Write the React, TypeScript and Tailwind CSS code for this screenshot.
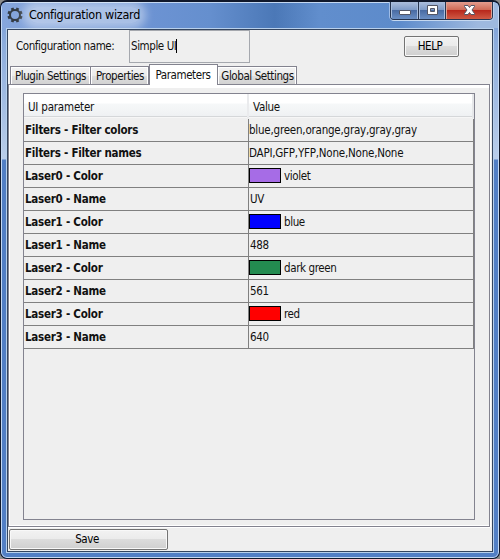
import React from 'react';

type Row = { name: string; value: string; swatch?: string; tight?: boolean };

const rows: Row[] = [
  { name: 'Filters - Filter colors', value: 'blue,green,orange,gray,gray,gray' },
  { name: 'Filters - Filter names', value: 'DAPI,GFP,YFP,None,None,None' },
  { name: 'Laser0 - Color', value: 'violet', swatch: 'bg-[#a66ce6]', tight: true },
  { name: 'Laser0 - Name', value: 'UV', tight: true },
  { name: 'Laser1 - Color', value: 'blue', swatch: 'bg-[#0000ff]', tight: true },
  { name: 'Laser1 - Name', value: '488', tight: true },
  { name: 'Laser2 - Color', value: 'dark green', swatch: 'bg-[#238b50]', tight: true },
  { name: 'Laser2 - Name', value: '561', tight: true },
  { name: 'Laser3 - Color', value: 'red', swatch: 'bg-[#ff0000]', tight: true },
  { name: 'Laser3 - Name', value: '640', tight: true },
];

function Gear() {
  const teeth = [22.5, 67.5, 112.5, 157.5, 202.5, 247.5, 292.5, 337.5];
  return (
    <svg width="16" height="16" viewBox="0 0 16 16" className="shrink-0">
      <circle cx="8" cy="8" r="5" fill="none" stroke="#333b43" strokeWidth="2" />
      {teeth.map((a) => (
        <rect key={a} x="6.6" y="0.4" width="2.8" height="2.6" fill="#333b43" transform={`rotate(${a} 8 8)`} />
      ))}
    </svg>
  );
}

function Tab({ label, className }: { label: string; className: string }) {
  return (
    <div className={`flex h-[18px] items-center justify-center border-t border-r border-[#83838f] bg-[linear-gradient(180deg,#f3f3f3,#ebebeb_50%,#dedede_52%,#d2d2d2)] pt-px shadow-[inset_1px_1px_0_#fff,inset_-1px_0_0_#fff] ${className}`}>
      {label}
    </div>
  );
}

function PushButton({ label, className }: { label: string; className: string }) {
  return (
    <div className={`flex h-[21px] items-center justify-center rounded-[2px] border border-[#737373] bg-[linear-gradient(180deg,#f2f2f2,#ebebeb_48%,#dcdcdc_50%,#cfcfcf)] pb-px text-black shadow-[inset_0_0_0_1px_#f8f8f8] ${className}`}>
      {label}
    </div>
  );
}

function WindowButtons() {
  return (
    <div className="flex h-[19px] w-[103px] overflow-hidden rounded-b-[4px] border border-t-0 border-[#26344f] shadow-[0_1px_0_#c5d8f0,1px_0_0_#b9cfeb,-1px_0_0_#9fbce6]">
      <div className="flex w-[28px] items-center justify-center border-r border-[#26344f] bg-[linear-gradient(180deg,#b2c3df,#7f9bc7_48%,#496ba3_52%,#6b8fc4)] pt-px shadow-[inset_1px_0_0_#a8bddd,inset_-1px_0_0_#a8bddd]">
        <svg width="14" height="14" viewBox="0 0 14 14"><rect x="1.5" y="6.5" width="11" height="4" rx="0.5" fill="#fff" stroke="#535666" /></svg>
      </div>
      <div className="flex w-[27px] items-center justify-center border-r border-[#26344f] bg-[linear-gradient(180deg,#b2c3df,#7f9bc7_48%,#496ba3_52%,#6b8fc4)] shadow-[inset_1px_0_0_#a8bddd,inset_-1px_0_0_#a8bddd]">
        <svg width="13" height="11" viewBox="0 0 13 11"><path d="M1.5 .5h10v9h-10zM4.5 3.5h4v3h-4z" fill="#fff" fillRule="evenodd" stroke="#535666" /></svg>
      </div>
      <div className="flex grow items-center justify-center bg-[linear-gradient(180deg,#e5a395,#cf6b57_48%,#b8281c_52%,#cf5a45)] shadow-[inset_1px_0_0_#dfa193,inset_-1px_0_0_#dfa193]">
        <svg width="13" height="11" viewBox="0 0 13 11"><path d="M1.5 .5H5L6.5 2.5 8 .5h3.5v1L9 5l2.5 3.5v1H8L6.5 7.5 5 9.5H1.5v-1L4 5 1.5 1.5z" fill="#fff" stroke="#535666" /></svg>
      </div>
    </div>
  );
}

export default function App() {
  return (
    <div className="h-[559px] w-[500px] bg-[#8c8c8c] font-['DejaVu_Sans_Condensed','DejaVu_Sans',sans-serif] text-[11.5px] leading-[14px] tracking-[-0.42px] text-[#111] [font-stretch:condensed]">
      <div className="h-full overflow-hidden rounded-[7px] border border-t-2 border-[#10182b] bg-[#527fc5]">
        <div className="h-full rounded-[6px] border border-[#c4d8f2] bg-[linear-gradient(180deg,#7598d2_0px,#8cacdc_40px,#b9cdea_156px,#527fc5_157px)]">
          <header className="flex h-[25px] justify-between bg-[linear-gradient(90deg,#86a6dc_0%,#6c93d3_30%,#658fce_42%,#4b78b7_55%,#618ecd_64%,#5d8bcb_80%,#9eb9df_96%)] pl-[5px]">
            <div className="flex items-center gap-[6px] pb-[2px]">
              <Gear />
              <span className="rounded-full bg-white/40 text-[12.5px] leading-[16px] tracking-[-0.27px] text-black shadow-[0_0_9px_6px_rgba(255,255,255,0.4)]">Configuration wizard</span>
            </div>
            <div className="-mt-[2px] mr-[5px]"><WindowButtons /></div>
          </header>
          <main className="mx-[4px] flex h-[525px] flex-col border border-[#b8d0ec]">
            <div className="flex grow flex-col border border-[#34455f] bg-[#efefef]">
              <div className="flex h-[34px]">
                <span className="w-[121px] pt-[9px] pl-[8px]">Configuration name:</span>
                <div className="flex h-[33px] w-[121px] items-center border border-[#a5a8ae] pb-px pl-px">
                  Simple UI<span className="h-[14px] w-px bg-black" />
                </div>
                <PushButton label="HELP" className="ml-[154px] mt-[6px] w-[55px] pr-[3px]" />
              </div>
              <div className="flex h-[20px] items-end pl-[2px]">
                <Tab label="Plugin Settings" className="w-[81px] border-l" />
                <Tab label="Properties" className="w-[58px] pl-px" />
                <div className="relative z-10 -mb-px flex h-[21px] w-[69px] justify-center border border-b-0 border-[#83838f] bg-white pt-[3px] pr-px">Parameters</div>
                <Tab label="Global Settings" className="w-[79px] pl-px" />
              </div>
              <section className="h-[443px] w-[482px] border border-[#83838f] bg-[#efefef] shadow-[0_1px_0_#fff,1px_0_0_#fff]">
                <div className="h-full border-t-[3px] border-b border-l border-white pt-[5px] pl-[13px]">
                  <div className="h-[427px] w-[452px] border border-[#83838f]">
                    <div className="flex h-[25px] border-b border-[#efefef] bg-[linear-gradient(180deg,#fff_0_9px,#f6f8f9_10px,#eff1f3_22px,#d5d7d9_22px_23px,#f6f6f6_23px)]">
                      <div className="w-[225px] border-r-2 border-[#eaebed] pt-[6px] pl-[4px] tracking-[-0.2px]">UI parameter</div>
                      <div className="grow border-r-2 border-[#e6e7e9] pt-[6px] pl-[4px] tracking-[-0.3px]">Value</div>
                    </div>
                    {rows.map((row) => (
                      <div key={row.name} className="flex h-[23px] border-b border-[#808080] text-[#111]">
                        <div className="flex w-[225px] items-center border-r border-[#808080] pl-px font-bold tracking-[-0.25px]">{row.name}</div>
                        <div className={`flex grow items-center border-r border-[#808080] ${row.tight ? 'tracking-[-0.38px]' : 'tracking-[-0.22px]'}`}>
                          {row.swatch ? <span className={`mr-[3px] mb-px h-[15px] w-[32px] border border-black ${row.swatch}`} /> : <span className={row.tight ? 'w-px' : 'w-0'} />}
                          {row.value}
                        </div>
                      </div>
                    ))}
                  </div>
                </div>
              </section>
              <PushButton label="Save" className="mt-[2px] ml-px w-[159px] pr-[3px]" />
            </div>
          </main>
        </div>
      </div>
    </div>
  );
}
